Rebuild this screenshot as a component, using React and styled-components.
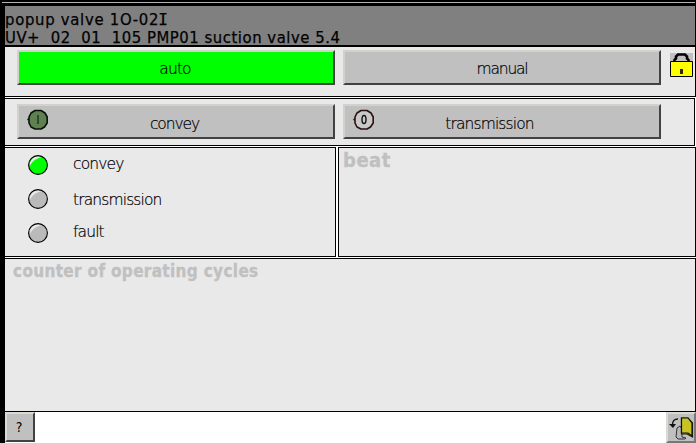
import React from "react";
import styled, { createGlobalStyle } from "styled-components";

const Global = createGlobalStyle`
  * { box-sizing: border-box; }
  html, body { margin: 0; overflow: hidden; background: #000; }
  button { font: inherit; }
`;

const Screen = styled.main`
  width: 696px;
  height: 443px;
  padding: 2px 0 0 5px;
  background: #000;
  color: #000;
  font-family: "DejaVu Sans Condensed", "DejaVu Sans", sans-serif;
  display: flex;
  flex-direction: column;
  overflow: hidden;
`;

const TopRule = styled.div`
  flex: none;
  height: 1px;
  margin: 0 1px 3px -3px;
  background: #b4b4b4;
`;

const Header = styled.header`
  flex: none;
  width: 690px;
  height: 39px;
  margin-bottom: 2px;
  padding-top: 5px;
  background: #808080;
`;

const Title = styled.div`
  height: 18px;
  line-height: 18px;
  font-size: 16.5px;
  letter-spacing: ${(p) => p.$spacing}px;
  -webkit-text-stroke: 0.25px #000;
  white-space: pre;
`;

const SlabLetter = styled.span`
  font-family: "DejaVu Sans Mono", monospace;
  font-size: 16px;
  margin-left: -1px;
`;

const Body = styled.div`
  flex: none;
  height: 365px;
  background: #fff;
  display: flex;
  flex-direction: column;
  gap: 1px;
`;

const Panel = styled.section`
  flex: none;
  width: ${(p) => p.$width || 691}px;
  height: ${(p) => p.$height}px;
  background: #e9e9e9;
  border: solid #000;
  border-width: ${(p) => p.$border || "1px 1px 1px 0"};
`;

const ButtonRow = styled(Panel)`
  display: flex;
  align-items: flex-start;
  gap: 8px;
  padding: ${(p) => p.$top}px 0 0 12px;
`;

const PushButton = styled.button`
  position: relative;
  width: 318px;
  height: 35px;
  padding: ${(p) => p.$drop || 0}px ${(p) => p.$trim || 0}px 0 0;
  border: solid;
  border-width: 2px;
  border-color: #d2d1cb #424242 #424242 #d2d1cb;
  background: ${(p) => (p.$active ? "#00ff00" : "#c0c0c0")};
  display: flex;
  align-items: center;
  justify-content: center;
`;

const Label = styled.span`
  font-family: "DejaVu Sans", sans-serif;
  font-weight: 200;
  font-size: 15.5px;
  line-height: 20px;
  letter-spacing: ${(p) => p.$spacing ?? -0.87}px;
  -webkit-text-stroke: 0.2px #000;
  color: #000;
`;

const ButtonIcon = styled.svg`
  position: absolute;
  left: 8px;
  top: 3px;
  width: 22px;
  height: 22px;
`;

const LockIcon = styled.svg`
  width: 23px;
  height: 24px;
  margin: 3px 0 0 1px;
`;

const Split = styled.div`
  flex: none;
  display: flex;
  gap: 2px;
`;

const StatusList = styled(Panel)`
  padding: 6px 0 0 22px;
`;

const StatusRow = styled.div`
  display: flex;
  height: ${(p) => p.$height}px;
`;

const Lamp = styled.svg`
  width: 22px;
  height: 22px;
  margin: ${(p) => p.$top}px 24px 0 0;
`;

const Heading = styled.h2`
  margin: 0;
  padding: ${(p) => p.$pad};
  font-size: ${(p) => p.$size}px;
  line-height: 22px;
  font-weight: bold;
  letter-spacing: ${(p) => p.$spacing}px;
  -webkit-text-stroke: 0.3px #c0c0c0;
  color: #c0c0c0;
`;

const Footer = styled.footer`
  flex: none;
  height: 31px;
  background: #fff;
  display: flex;
  justify-content: space-between;
`;

const SmallButton = styled.button`
  width: 30px;
  height: ${(p) => p.$height}px;
  padding: 0 2px 0 0;
  border: 2px solid;
  border-color: #dad9d4 #424242 #424242 #dad9d4;
  background: #c0c0c0;
  display: flex;
  align-items: center;
  justify-content: center;
  font-size: 14px;
`;

const ExitButton = styled(SmallButton)`
  padding: 0;
  border-color: #dad9d4 #777 #777 #dad9d4;
`;

function StateIcon({ on }) {
  return (
    <ButtonIcon viewBox="0 0 22 22">
      <path
        d="M8 1.5H14L18 4L20.2 8V14L17.5 18L14 20H8L4 18L2 14V11L1 10.5L2 10V8L4 4Z"
        fill={on ? "#5f8050" : "#c9c9c9"}
        stroke={on ? "#071307" : "#2a1010"}
        strokeWidth="1.6"
        strokeLinejoin="round"
      />
      {on ? (
        <path d="M11 6V15" stroke="#142413" strokeWidth="1.2" />
      ) : (
        <ellipse cx="11" cy="10.5" rx="2" ry="4" fill="none" stroke="#111" strokeWidth="1.4" />
      )}
    </ButtonIcon>
  );
}

function Status({ text, color, height, top }) {
  return (
    <StatusRow $height={height}>
      <Lamp viewBox="0 0 22 22" $top={top}>
        <circle cx="11" cy="11" r="9.4" fill={color} />
        <path d="M3 12C2 7 6 2 12 2L15 3C10 4 5 7 3 12Z" fill="#e8e8e8" />
        <circle cx="11" cy="11" r="9.4" fill="none" stroke="#000" strokeWidth="1.1" />
      </Lamp>
      <Label>{text}</Label>
    </StatusRow>
  );
}

export default function App() {
  return (
    <>
      <Global />
      <Screen>
        <TopRule />
        <Header>
          <Title $spacing={0.72}>
            popup valve 1O-02<SlabLetter>I</SlabLetter>
          </Title>
          <Title $spacing={0.55}>UV+  02  01  105 PMP01 suction valve 5.4</Title>
        </Header>
        <Body>
          <ButtonRow $height={50} $top={3} $border="0 1px 1px 0">
            <PushButton $active $trim={2} $drop={2}><Label>auto</Label></PushButton>
            <PushButton $drop={2}><Label $spacing={-1.2}>manual</Label></PushButton>
            <LockIcon viewBox="0 0 23 24">
              <path d="M0 0H23V9H0Z" fill="#c0c0c0" />
              <path d="M4.5 9V7L6 5.5V3.5L8 1.5H15L17 3.5V5.5L18.5 7V9" fill="none" stroke="#000" strokeWidth="2.6" />
              <path d="M.5 8.5H22.5V23.5H.5Z" fill="#ff0" stroke="#000" />
              <path d="M10 16H13V21H10Z" fill="#302800" />
            </LockIcon>
          </ButtonRow>
          <ButtonRow $height={48} $top={5} $width={690}>
            <PushButton $drop={4} $trim={3}><StateIcon on /><Label $spacing={-1.1}>convey</Label></PushButton>
            <PushButton $drop={4} $trim={25}><StateIcon /><Label>transmission</Label></PushButton>
          </ButtonRow>
          <Split>
            <StatusList $height={110} $width={331}>
              <Status text="convey" color="#00ff00" height={36} top={0} />
              <Status text="transmission" color="#bababa" height={32} top={-2} />
              <Status text="fault" color="#bababa" height={33} top={0} />
            </StatusList>
            <Panel $height={110} $width={358} $border="1px">
              <Heading $size={20} $spacing={0.5} $pad="1px 0 0 4px">beat</Heading>
            </Panel>
          </Split>
          <Panel $height={154}>
            <Heading $size={17} $spacing={0.33} $pad="1px 0 0 8px">counter of operating cycles</Heading>
          </Panel>
        </Body>
        <Footer>
          <SmallButton $height={30}>?</SmallButton>
          <ExitButton $height={31} aria-label="close">
            <svg width="26" height="27" viewBox="0 0 26 27">
              <path d="M9 14L12 12L14 15V23L18 24L17 25H10L8 23Z" fill="#b8b8b8" stroke="#333" />
              <path d="M13.5 4H20L24.5 9V23L19 20H13.5Z" fill="#c8c323" stroke="#222" strokeWidth="1.2" />
              <path d="M13.5 4H20L24 9V22L20 19H13.5Z" fill="#c8c323" stroke="#111" strokeWidth="1.2" />
              <path d="M10 5C6 5 4.5 7 4.5 11" fill="none" stroke="#111" strokeWidth="1.3" />
              <path d="M1 10H8L5 14Z" fill="#111" />
            </svg>
          </ExitButton>
        </Footer>
      </Screen>
    </>
  );
}
